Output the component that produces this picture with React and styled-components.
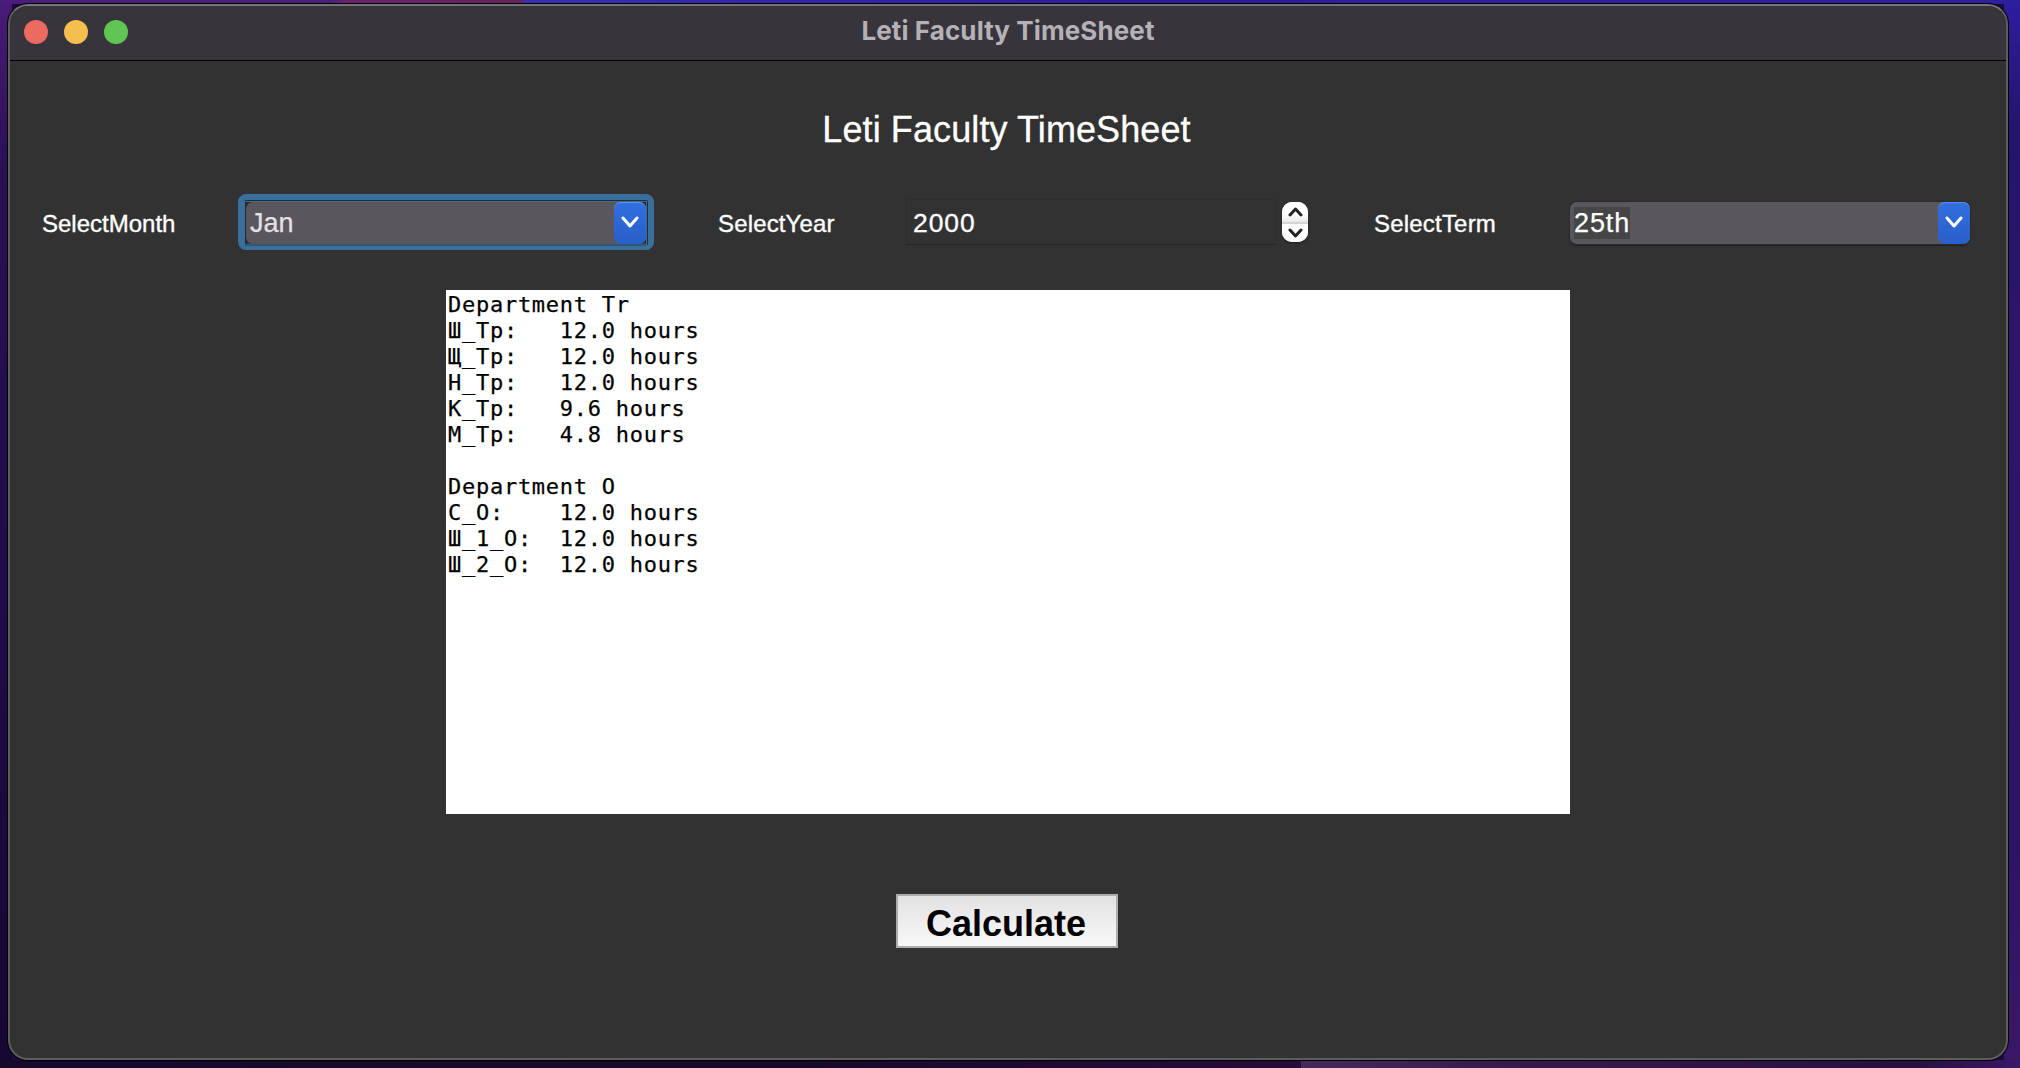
import React from "react";
import styled, { createGlobalStyle } from "styled-components";

const Global = createGlobalStyle`
  * { box-sizing: border-box; }
  body { margin: 0; overflow: hidden; font-family: "Liberation Sans", Arial, sans-serif; }
`;

const Desktop = styled.div`
  width: 2020px;
  height: 1068px;
  padding: 4px 12px 8px 8px;
  background:
    linear-gradient(90deg, #150a2c, #160829 60%, #260c3a) 0 1060px / 1301px 8px no-repeat,
    linear-gradient(90deg, #432a5c, #361a4e 30%, #26103f 85%, #3a1767) 1301px 1060px / 719px 8px no-repeat,
    linear-gradient(90deg, #4a1d7d, #4a1d7d 330px, #6b236b 345px, #66215f 520px, #382fb5 526px, #2b1da0 1100px, #2b1fa0) 0 0 / 2020px 4px no-repeat,
    linear-gradient(180deg, #4a1b78, #2a1052 16%, #1f0b48 60%, #150733) 0 0 / 12px 1068px no-repeat,
    linear-gradient(180deg, #2c1e9e, #25146c 12%, #2b1668 30%, #2d1463 80%, #3b1768) 2004px 0 / 16px 1068px no-repeat,
    #1b0a3c;
`;

const Window = styled.main`
  display: flex;
  flex-direction: column;
  width: 2000px;
  height: 1056px;
  border: 2px solid #5d5d5d;
  border-top-color: #76757a;
  border-radius: 20px;
  background: #323232;
  box-shadow: 0 0 0 1px #000;
  overflow: hidden;
`;

const TitleBar = styled.header`
  flex: none;
  display: grid;
  grid-template-columns: 200px 1fr 200px;
  height: 55px;
  padding: 0 14px;
  border-bottom: 1px solid #000;
  background: #38343b;
`;

const Lights = styled.div`
  display: flex;
  gap: 16px;
  padding-top: 14px;
`;

const Light = styled.span`
  width: 24px;
  height: 24px;
  border-radius: 50%;
  background: ${(p) => p.$color};
`;

const WindowTitle = styled.div`
  padding-top: 9px;
  text-align: center;
  font: 700 26px/32px Inter, sans-serif;
  letter-spacing: 0.1px;
  color: #b4b1b7;
`;

const Content = styled.section`
  flex: 1;
  display: flex;
  flex-direction: column;
  align-items: center;
`;

const Heading = styled.h1`
  margin: 48px 0 0;
  padding-right: 3px;
  font-size: 36px;
  line-height: 42px;
  font-weight: 400;
  letter-spacing: 0.1px;
  color: #fff;
  -webkit-text-stroke: 0.3px #fff;
`;

const Controls = styled.div`
  align-self: stretch;
  display: flex;
  align-items: center;
  height: 56px;
  margin-top: 43px;
  padding-left: 32px;
`;

const Label = styled.label`
  flex: none;
  width: ${(p) => p.$width}px;
  padding-top: 4px;
  font-size: 24px;
  line-height: 28px;
  letter-spacing: ${(p) => p.$spacing || 0}px;
  color: #fff;
  -webkit-text-stroke: 0.35px #fff;
`;

const FocusRing = styled.div`
  flex: none;
  width: 416px;
  height: 56px;
  margin-right: 64px;
  padding: 1px 1px 1px 0;
  border: 6px solid #3a6f9b;
  border-bottom-width: 4px;
  border-radius: 8px;
  background: #262a2e;
`;

const FocusInset = styled.div`
  width: 403px;
  height: 45px;
  padding: 0 1px 3px;
  border-top: 1px solid #3a6f9b;
  border-left: 1px solid #3a6f9b;
  border-right: 1px solid #3a6f9b;
  background: linear-gradient(#262a2e 41px, #2d5878 42px);
`;

const Combo = styled.div`
  flex: none;
  display: flex;
  align-items: center;
  width: ${(p) => p.$width}px;
  height: 42px;
  margin-top: ${(p) => (p.$outlined ? 2 : 0)}px;
  border-radius: 7px;
  background: #5a565d;
  box-shadow: ${(p) => (p.$outlined ? "0 0 0 1px #2a2a2b, 0 2px 1px #202020" : "none")};
`;

const ComboText = styled.span`
  height: 32px;
  margin-left: 4px;
  margin-right: auto;
  font-size: 27px;
  line-height: 33px;
  letter-spacing: ${(p) => (p.$selected ? 0.9 : 0)}px;
  color: ${(p) => (p.$selected ? "#fff" : "#e2e1e3")};
  background: ${(p) => (p.$selected ? "#464646" : "transparent")};
  -webkit-text-stroke: 0.25px currentColor;
`;

const ComboArrow = styled.span`
  display: grid;
  place-items: center;
  width: 32px;
  height: 42px;
  padding-bottom: 2px;
  border-radius: 7px;
  background: linear-gradient(#316fe0, #295fc8);
  box-shadow: inset 0 1px 0 #5b8fea;
`;

const YearField = styled.div`
  flex: none;
  width: 370px;
  height: 46px;
  margin-right: 6px;
  padding: 0 6px;
  border: 1px solid #2e2e2e;
  border-bottom-color: #252525;
  font-size: 26.5px;
  line-height: 46px;
  letter-spacing: 0.9px;
  color: #fff;
  -webkit-text-stroke: 0.3px #fff;
`;

const Stepper = styled.div`
  flex: none;
  display: flex;
  flex-direction: column;
  width: 26px;
  height: 40px;
  margin-right: 66px;
  border-radius: 10px;
  background: #fff;
  box-shadow: 0 1px 2px #1c1c1c;
  overflow: hidden;
`;

const Step = styled.span`
  display: grid;
  place-items: center;
  height: 20px;
  background: linear-gradient(#fff 60%, #e9e9e9);
  & + & { border-top: 2px solid #d4d4d4; background: #fff; }
`;

const Output = styled.pre`
  flex: none;
  width: 1124px;
  height: 524px;
  margin: 40px 0 0 0;
  padding: 2px 2px;
  background: #fff;
  color: #000;
  font: 22px/26px "DejaVu Sans Mono", monospace;
  letter-spacing: 0.73px;
  -webkit-text-stroke: 0.25px #000;
`;

const Calculate = styled.button`
  width: 222px;
  height: 54px;
  margin: 80px 2px 0 0;
  padding: 6px 2px 0 0;
  border: 2px solid #adadad;
  background: linear-gradient(#e2e2e2, #f8f8f8);
  color: #000;
  font: bold 36px/44px "Liberation Sans", Arial, sans-serif;
`;

const Chevron = ({ width, height, stroke, color, up }) => (
  <svg width={width} height={height} viewBox={`0 0 ${width} ${height}`} fill="none">
    <path
      d={
        up
          ? `M2 ${height - 2}L${width / 2} 2L${width - 2} ${height - 2}`
          : `M2 2L${width / 2} ${height - 2}L${width - 2} 2`
      }
      stroke={color}
      strokeWidth={stroke}
      strokeLinecap="round"
      strokeLinejoin="round"
    />
  </svg>
);

const report = `Department Tr
Ш_Тр:   12.0 hours
Щ_Тр:   12.0 hours
Н_Тр:   12.0 hours
К_Тр:   9.6 hours
М_Тр:   4.8 hours

Department O
С_О:    12.0 hours
Ш_1_О:  12.0 hours
Ш_2_О:  12.0 hours`;

const ComboBox = ({ value, width, selected, outlined }) => (
  <Combo $width={width} $outlined={outlined}>
    <ComboText $selected={selected}>{value}</ComboText>
    <ComboArrow>
      <Chevron width={18} height={12} stroke={3} color="#fff" />
    </ComboArrow>
  </Combo>
);

export default function App() {
  return (
    <>
      <Global />
      <Desktop>
        <Window>
          <TitleBar>
            <Lights>
              <Light $color="#ed6a5e" />
              <Light $color="#f5bf4f" />
              <Light $color="#61c554" />
            </Lights>
            <WindowTitle>Leti Faculty TimeSheet</WindowTitle>
          </TitleBar>
          <Content>
            <Heading>Leti Faculty TimeSheet</Heading>
            <Controls>
              <Label $width={196}>SelectMonth</Label>
              <FocusRing>
                <FocusInset>
                  <ComboBox value="Jan" width={400} />
                </FocusInset>
              </FocusRing>
              <Label $width={188} $spacing={0.15}>SelectYear</Label>
              <YearField>2000</YearField>
              <Stepper>
                <Step><Chevron width={15} height={10} stroke={3} color="#222" up /></Step>
                <Step><Chevron width={15} height={10} stroke={3} color="#222" /></Step>
              </Stepper>
              <Label $width={196} $spacing={0.2}>SelectTerm</Label>
              <ComboBox value="25th" width={400} selected outlined />
            </Controls>
            <Output>{report}</Output>
            <Calculate>Calculate</Calculate>
          </Content>
        </Window>
      </Desktop>
    </>
  );
}
